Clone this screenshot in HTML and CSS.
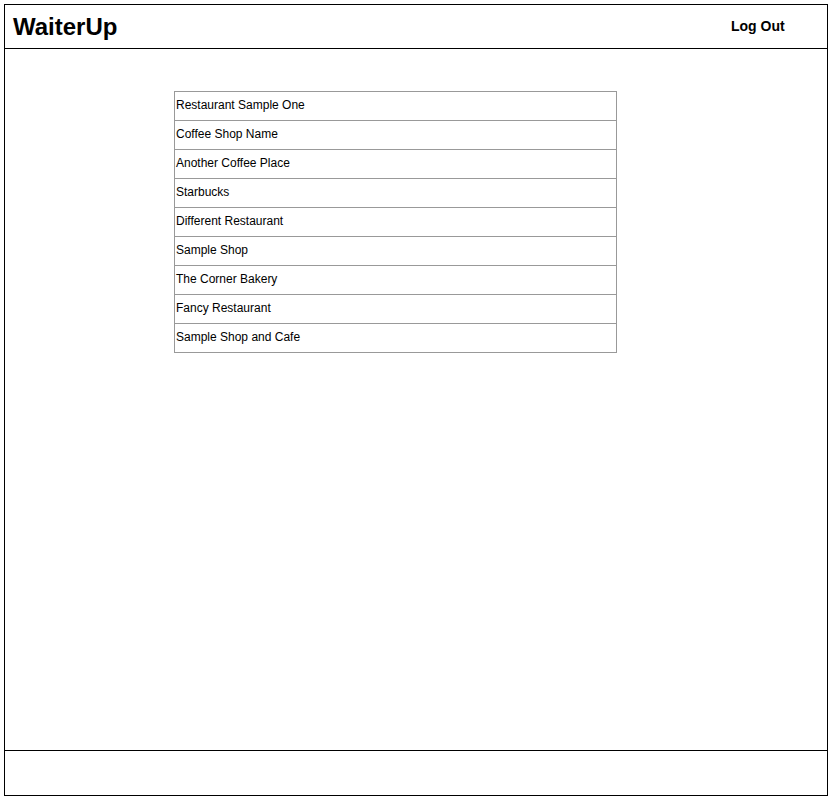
FILE: index.html
```html
<!DOCTYPE html>
<html>
<head>
<meta charset="utf-8">
<link rel="stylesheet" href="styles.css">
</head>
<body>
<div class="frame">
  <header class="header">
    <h1 class="brand">WaiterUp</h1>
    <a class="logout">Log Out</a>
  </header>
  <main class="main">
    <ul class="list">
      <li>Restaurant Sample One</li>
      <li>Coffee Shop Name</li>
      <li>Another Coffee Place</li>
      <li>Starbucks</li>
      <li>Different Restaurant</li>
      <li>Sample Shop</li>
      <li>The Corner Bakery</li>
      <li>Fancy Restaurant</li>
      <li>Sample Shop and Cafe</li>
    </ul>
  </main>
  <footer class="footer"></footer>
</div>
</body>
</html>
```
FILE: styles.css
```css
html, body { margin: 0; padding: 0; background: #fff; }
body { padding: 4px; font-family: "Liberation Sans", Arial, sans-serif; color: #000; }
.frame {
  box-sizing: border-box;
  width: 824px;
  height: 792px;
  border: 1px solid #000;
  display: flex;
  flex-direction: column;
}
.header {
  height: 44px;
  box-sizing: border-box;
  border-bottom: 1px solid #000;
  display: flex;
  align-items: center;
  justify-content: space-between;
  padding: 0 12px 0 8px;
}
.brand { margin: 0; font-size: 24px; font-weight: bold; line-height: 1; }
.logout { font-size: 14px; font-weight: bold; width: 84px; margin-bottom: 2px; }
.main { flex: 1; padding-top: 42px; padding-left: 169px; }
.list {
  list-style: none;
  margin: 0;
  padding: 0;
  width: 443px;
  box-sizing: border-box;
  border: 1px solid #999;
  border-bottom: none;
}
.list li {
  height: 29px;
  box-sizing: border-box;
  border-bottom: 1px solid #999;
  font-size: 12px;
  padding-left: 1px;
  padding-bottom: 2px;
  display: flex;
  align-items: center;
}
.footer { height: 45px; box-sizing: border-box; border-top: 1px solid #000; }
```
